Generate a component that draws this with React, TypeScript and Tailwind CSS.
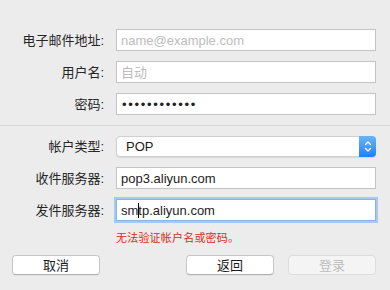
const font = { fontFamily: '"Liberation Sans", "Noto Sans CJK SC", sans-serif' }

function Label({ children }: { children: React.ReactNode }) {
  return (
    <div className="flex h-full items-center justify-end text-[13px] leading-none text-[#262626]">
      {children}
    </div>
  )
}

function Field({ children, focus = false }: { children: React.ReactNode; focus?: boolean }) {
  return (
    <div
      className={`flex h-[22px] items-center border bg-white pl-[4px] text-[13px] leading-none text-[#1c1c1c] ${
        focus ? "border-[#8ab4e6] shadow-[0_0_0_2px_#a8c9ef]" : "border-[#c4c4c4]"
      }`}
    >
      {children}
    </div>
  )
}

function Button({ label, disabled = false }: { label: string; disabled?: boolean }) {
  return (
    <div
      className={`flex h-[20px] w-[88px] items-center justify-center rounded-[4px] border text-[13px] leading-none ${
        disabled
          ? "border-[#dcdcdc] bg-[#f4f4f4] text-[#bdbdbd]"
          : "border-[#c6c6c6] border-b-[#b0b0b0] bg-white text-[#1c1c1c] shadow-[0_1px_0_rgba(0,0,0,0.04)]"
      }`}
    >
      {label}
    </div>
  )
}

export default function App() {
  return (
    <div className="h-[290px] w-[390px] overflow-hidden bg-[#ececec]" style={font}>
      {/* account fields */}
      <div className="grid grid-cols-[104px_260px] gap-x-3 gap-y-[10px] pt-[29px]">
        <Label>电子邮件地址:</Label>
        <Field>
          <span className="text-[#bcbcbc]">name@example.com</span>
        </Field>
        <Label>用户名:</Label>
        <Field>
          <span className="text-[#bcbcbc]">自动</span>
        </Field>
        <Label>密码:</Label>
        <Field>
          <span className="pl-[1px] text-[13px] tracking-[1.7px] text-[#222]">••••••••••••</span>
        </Field>
      </div>

      <div className="mt-[10px] h-px bg-[#d8d8d8]" />

      {/* server settings */}
      <div className="mt-[10px] grid grid-cols-[104px_260px] gap-x-3 gap-y-[10px]">
        <Label>帐户类型:</Label>
        <div className="flex h-[21px] items-stretch rounded-[4px] border border-[#cfcfcf] bg-white shadow-[0_1px_1px_rgba(0,0,0,0.08)]">
          <div className="flex flex-1 items-center pl-[9px] text-[13px] leading-none text-[#1c1c1c]">POP</div>
          <div className="-my-px -mr-px flex w-[17px] items-center justify-center rounded-r-[4px] bg-gradient-to-b from-[#6ab4fb] to-[#1b7ff8]">
            <svg width="8" height="13" viewBox="0 0 8 13" fill="none" stroke="white" strokeWidth="1.4" strokeLinecap="round" strokeLinejoin="round">
              <path d="M1.5 4.5 L4 2 L6.5 4.5" />
              <path d="M1.5 8.5 L4 11 L6.5 8.5" />
            </svg>
          </div>
        </div>
        <Label>收件服务器:</Label>
        <Field>pop3.aliyun.com</Field>
        <Label>发件服务器:</Label>
        <Field focus>
          sm<span className="mx-[-0.5px] inline-block h-[15px] w-px bg-black" />tp.aliyun.com
        </Field>
        <div />
        <div className="pt-[2px] text-[11px] leading-none tracking-[0.2px] text-[#e3261f]">无法验证帐户名或密码。</div>
      </div>

      {/* actions */}
      <div className="mt-[11px] flex items-center justify-between pl-3 pr-[14px]">
        <Button label="取消" />
        <div className="flex gap-[14px]">
          <Button label="返回" />
          <Button label="登录" disabled />
        </div>
      </div>
    </div>
  )
}
